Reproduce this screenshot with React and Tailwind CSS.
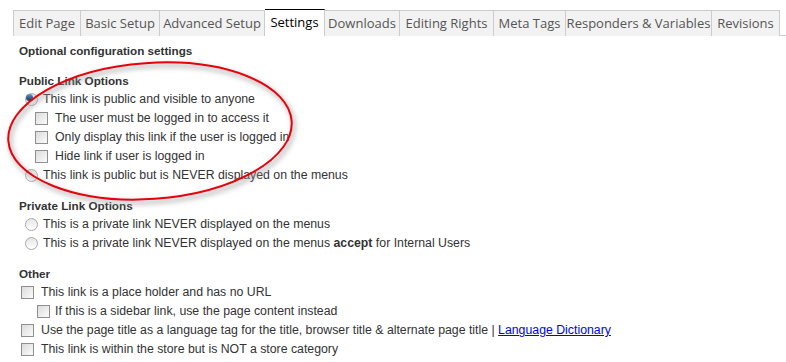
import React from "react";

const tabs = [
  ["Edit Page", 68],
  ["Basic Setup", 79],
  ["Advanced Setup", 105],
  ["Settings", 60],
  ["Downloads", 75],
  ["Editing Rights", 94],
  ["Meta Tags", 72],
  ["Responders & Variables", 146],
  ["Revisions", 68],
];

function Radio({ checked }) {
  return (
    <span className="inline-block w-[13px] h-[13px] rounded-full border border-[#a9a9a9] bg-gradient-to-b from-[#e6e6e6] to-[#ffffff] shrink-0 flex items-center justify-center">
      {checked && <span className="block w-[7px] h-[7px] rounded-full bg-gradient-to-b from-[#5c9bd1] to-[#12324f]" />}
    </span>
  );
}

function Check() {
  return (
    <span className="inline-block w-[13px] h-[13px] border border-[#8f8f8f] bg-gradient-to-br from-[#dcdcdc] to-[#fbfbfb] shrink-0" />
  );
}

function Row({ children, className = "" }) {
  return <div className={"flex items-center h-[19px] text-[12.3px] " + className}>{children}</div>;
}

function Heading({ children, className = "" }) {
  return <div className={"font-bold h-[19px] flex items-center text-[11.7px] " + className}>{children}</div>;
}

export default function App() {
  return (
    <div className="relative w-[786px] h-[362px] bg-white overflow-hidden">
      <div className="flex ml-[13px] mt-[10px] h-[26px] border-b border-[#cccccc]">
        {tabs.map(([t, w], i) => {
          const active = t === "Settings";
          return (
            <div
              key={t}
              style={{ width: w }}
              className={
                "flex items-center justify-center text-[13px] font-['Open_Sans','DejaVu_Sans',sans-serif] border-t border-r border-[#cccccc] " +
                (i === 0 ? "border-l " : "") +
                (active
                  ? "bg-white text-black border-t-black -mt-[1px] h-[27px] -mb-[1px] relative z-10"
                  : "bg-[#f2f2f2] text-[#555555] h-[26px]")
              }
            >
              {t}
            </div>
          );
        })}
      </div>
      <div className="pl-[19px] font-['Liberation_Sans',Arial,sans-serif] text-[#333333]">
        <Heading className="mt-[5px]">Optional configuration settings</Heading>
        <Heading className="mt-[11px]">Public Link Options</Heading>
        <Row className="pl-[6px] gap-[5px]"><Radio checked /> <span>This link is public and visible to anyone</span></Row>
        <Row className="pl-[16px] gap-[7px]"><Check /> <span>The user must be logged in to access it</span></Row>
        <Row className="pl-[16px] gap-[7px]"><Check /> <span>Only display this link if the user is logged in</span></Row>
        <Row className="pl-[16px] gap-[7px]"><Check /> <span>Hide link if user is logged in</span></Row>
        <Row className="pl-[6px] gap-[5px]"><Radio /> <span>This link is public but is NEVER displayed on the menus</span></Row>
        <Heading className="mt-[11px]">Private Link Options</Heading>
        <Row className="pl-[6px] gap-[5px]"><Radio /> <span>This is a private link NEVER displayed on the menus</span></Row>
        <Row className="pl-[6px] gap-[5px]"><Radio /> <span>This is a private link NEVER displayed on the menus <b>accept</b> for Internal Users</span></Row>
        <Heading className="mt-[11px]">Other</Heading>
        <Row className="pl-[2px] gap-[7px]"><Check /> <span>This link is a place holder and has no URL</span></Row>
        <Row className="pl-[18px] gap-[5px]"><Check /> <span>If this is a sidebar link, use the page content instead</span></Row>
        <Row className="pl-[2px] gap-[7px]"><Check /> <span>Use the page title as a language tag for the title, browser title &amp; alternate page title | <a className="text-[#0000ee] underline">Language Dictionary</a></span></Row>
        <Row className="pl-[2px] gap-[7px]"><Check /> <span>This link is within the store but is NOT a store category</span></Row>
      </div>
      <svg className="absolute left-0 top-0 pointer-events-none" width="786" height="362">
        <defs>
          <filter id="sh" x="-20%" y="-20%" width="140%" height="140%">
            <feGaussianBlur stdDeviation="2.5" />
          </filter>
        </defs>
        <ellipse cx="152" cy="134" rx="142" ry="68" transform="rotate(-4 152 134)" fill="none" stroke="#9a9a9a" strokeWidth="4" opacity="0.6" filter="url(#sh)" />
        <ellipse cx="150" cy="131" rx="142" ry="68" transform="rotate(-4 150 131)" fill="none" stroke="#e8000a" strokeWidth="2" />
      </svg>
    </div>
  );
}
